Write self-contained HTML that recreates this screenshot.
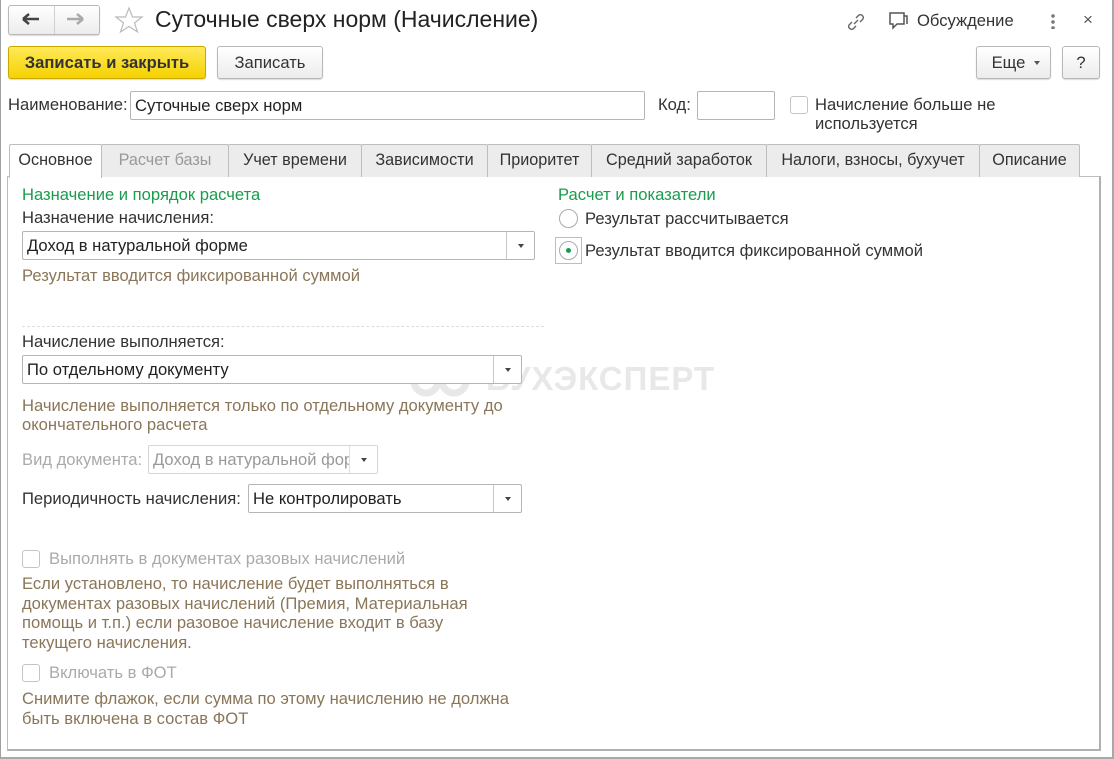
<!DOCTYPE html>
<html><head><meta charset="utf-8"><style>
*{box-sizing:border-box;margin:0;padding:0}
body{width:1114px;height:759px;position:relative;background:#fff;font-family:"Liberation Sans",Arial,sans-serif;font-size:16.6px;color:#333;overflow:hidden}
.a{position:absolute;white-space:nowrap}
.frame{left:0;top:0;width:1114px;height:759px;border:1px solid #a0a0a0;border-top:none;border-bottom:2px solid #a8a8a8;border-right:2px solid #a8a8a8}
.btn{position:absolute;border:1px solid #b8b8b8;border-radius:3px;background:linear-gradient(#fff,#ececec);box-shadow:0 1px 1px rgba(0,0,0,.15);text-align:center;color:#333}
.inp{position:absolute;border:1px solid #b5b5b5;border-radius:2px;background:#fff;padding-left:4px;color:#222}
.dd{position:absolute;right:0;top:0;bottom:0;width:28px;border-left:1px solid #c8c8c8}
.dd:after{content:"";position:absolute;left:11px;top:50%;margin-top:-2px;border-left:3px solid transparent;border-right:3px solid transparent;border-top:4px solid #444}
.tab{position:absolute;top:144px;height:33px;border:1px solid #bdbdbd;border-bottom:none;background:#ececec;text-align:center;line-height:30px;color:#333;border-radius:2px 2px 0 0;font-size:16.2px}
.desc{color:#8a7658}
.grn{color:#1a9c4c}
.cb{position:absolute;width:18px;height:18px;border:1px solid #c4c4c4;border-radius:3px;background:#fff}
</style></head><body>
<div class="a frame"></div>

<div class="btn" style="left:8px;top:5px;width:92px;height:30px"></div>
<div class="a" style="left:54px;top:6px;width:1px;height:28px;background:#d0d0d0"></div>
<svg class="a" style="left:22px;top:12px" width="18" height="14"><path d="M1 7H17M1 7L7 2M1 7L7 12" stroke="#444" stroke-width="2.5" fill="none"/></svg>
<svg class="a" style="left:66px;top:12px" width="18" height="14"><path d="M1 7H17M17 7L11 2M17 7L11 12" stroke="#aaa" stroke-width="2.5" fill="none"/></svg>
<svg class="a" style="left:114px;top:6px" width="30" height="28"><path d="M15 2L18.5 11H28L20.5 17L23.5 26L15 20.5L6.5 26L9.5 17L2 11H11.5Z" fill="none" stroke="#bbb" stroke-width="1.2"/></svg>
<div class="a" style="left:155px;top:6px;font-size:23px;color:#222">Суточные сверх норм (Начисление)</div>

<svg class="a" style="left:845px;top:11px" width="22" height="22"><path d="M9 13L13 9M7 11L4 14a3 3 0 0 0 4 4l3-3M15 11l3-3a3 3 0 0 0-4-4l-3 3" stroke="#666" stroke-width="1.4" fill="none"/></svg>
<svg class="a" style="left:887px;top:10px" width="22" height="22"><path d="M3 3H17V14H10L6 18V14H3Z" fill="none" stroke="#555" stroke-width="1.5"/><path d="M17 6H20V14" fill="none" stroke="#555" stroke-width="1.5"/></svg>
<div class="a" style="left:917px;top:11px;color:#333">Обсуждение</div>
<div class="a" style="left:1051px;top:13px;width:4px;height:16px;background:radial-gradient(circle,#777 1.6px,transparent 2px) 0 0/4px 6px repeat-y"></div>
<div class="a" style="left:1083px;top:10px;font-size:17px;color:#555">×</div>

<div class="btn" style="left:8px;top:46px;width:198px;height:33px;background:linear-gradient(#ffe95a,#f5d200);border-color:#c9a800;font-weight:bold;line-height:31px;color:#333">Записать и закрыть</div>
<div class="btn" style="left:217px;top:46px;width:106px;height:33px;line-height:31px">Записать</div>
<div class="btn" style="left:976px;top:46px;width:75px;height:33px;line-height:31px;padding-right:10px">Еще<span style="position:absolute;right:10px;top:14px;border-left:3px solid transparent;border-right:3px solid transparent;border-top:4px solid #555"></span></div>
<div class="btn" style="left:1062px;top:46px;width:38px;height:33px;line-height:31px">?</div>

<div class="a" style="left:8px;top:95px">Наименование:</div>
<div class="inp" style="left:130px;top:91px;width:515px;height:29px;line-height:27px">Суточные сверх норм</div>
<div class="a" style="left:658px;top:95px">Код:</div>
<div class="inp" style="left:697px;top:91px;width:78px;height:29px"></div>
<div class="cb" style="left:790px;top:96px"></div>
<div class="a" style="left:815px;top:95px;line-height:19px">Начисление больше не<br>используется</div>

<div class="a" style="left:7px;top:176px;width:1094px;height:575px;border:1px solid #bdbdbd;border-right-width:2px;border-bottom-width:2px;border-color:#bdbdbd #b0b0b0 #b0b0b0 #bdbdbd"></div>
<div class="tab" style="left:9px;width:93px;background:#fff;height:34px">Основное</div>
<div class="tab" style="left:101px;width:128px;color:#999">Расчет базы</div>
<div class="tab" style="left:228px;width:134px">Учет времени</div>
<div class="tab" style="left:361px;width:127px">Зависимости</div>
<div class="tab" style="left:487px;width:105px">Приоритет</div>
<div class="tab" style="left:591px;width:176px">Средний заработок</div>
<div class="tab" style="left:766px;width:214px">Налоги, взносы, бухучет</div>
<div class="tab" style="left:979px;width:101px">Описание</div>

<div class="a" style="left:408px;top:360px;font-size:33px;font-weight:bold;color:#e8e8e8;letter-spacing:1px">
<span style="display:inline-block;width:78px;height:34px;vertical-align:middle;position:relative"><svg width="70" height="40" style="position:absolute;top:-3px"><circle cx="18" cy="20" r="12" stroke="#e8e8e8" stroke-width="7" fill="none"/><circle cx="46" cy="20" r="12" stroke="#e8e8e8" stroke-width="7" fill="none"/></svg></span>БУХЭКСПЕРТ</div>

<div class="a grn" style="left:22px;top:185px">Назначение и порядок расчета</div>
<div class="a" style="left:22px;top:208px">Назначение начисления:</div>
<div class="inp" style="left:22px;top:231px;width:513px;height:29px;line-height:27px">Доход в натуральной форме<div class="dd"></div></div>
<div class="a desc" style="left:22px;top:266px">Результат вводится фиксированной суммой</div>
<div class="a" style="left:22px;top:326px;width:522px;border-top:1px dashed #ddd"></div>
<div class="a" style="left:22px;top:332px">Начисление выполняется:</div>
<div class="inp" style="left:22px;top:355px;width:500px;height:29px;line-height:27px">По отдельному документу<div class="dd"></div></div>
<div class="a desc" style="left:22px;top:396px;line-height:19px">Начисление выполняется только по отдельному документу до<br>окончательного расчета</div>
<div class="a" style="left:22px;top:450px;color:#aaa">Вид документа:</div>
<div class="inp" style="left:148px;top:445px;width:230px;height:29px;line-height:27px;color:#999;border-color:#d6d6d6;overflow:hidden">Доход в натуральной фор<div class="dd" style="border-color:#e0e0e0;background:#fff"></div></div>
<div class="a" style="left:22px;top:489px">Периодичность начисления:</div>
<div class="inp" style="left:248px;top:484px;width:274px;height:29px;line-height:27px">Не контролировать<div class="dd"></div></div>

<div class="cb" style="left:22px;top:550px"></div>
<div class="a" style="left:49px;top:549px;color:#aaa">Выполнять в документах разовых начислений</div>
<div class="a desc" style="left:22px;top:574px;line-height:19.5px">Если установлено, то начисление будет выполняться в<br>документах разовых начислений (Премия, Материальная<br>помощь и т.п.) если разовое начисление входит в базу<br>текущего начисления.</div>
<div class="cb" style="left:22px;top:664px"></div>
<div class="a" style="left:49px;top:663px;color:#aaa">Включать в ФОТ</div>
<div class="a desc" style="left:22px;top:689px;line-height:19.5px">Снимите флажок, если сумма по этому начислению не должна<br>быть включена в состав ФОТ</div>

<div class="a grn" style="left:558px;top:185px">Расчет и показатели</div>
<div class="a" style="left:559px;top:209px;width:19px;height:19px;border:1px solid #aaa;border-radius:50%"></div>
<div class="a" style="left:585px;top:209px">Результат рассчитывается</div>
<div class="a" style="left:555px;top:237px;width:27px;height:27px;border:1px solid #f0c800"></div>
<div class="a" style="left:559px;top:241px;width:19px;height:19px;border:1px solid #aaa;border-radius:50%"></div>
<div class="a" style="left:566px;top:248px;width:5px;height:5px;background:#1a9c4c;border-radius:50%"></div>
<div class="a" style="left:585px;top:241px">Результат вводится фиксированной суммой</div>
</body></html>
